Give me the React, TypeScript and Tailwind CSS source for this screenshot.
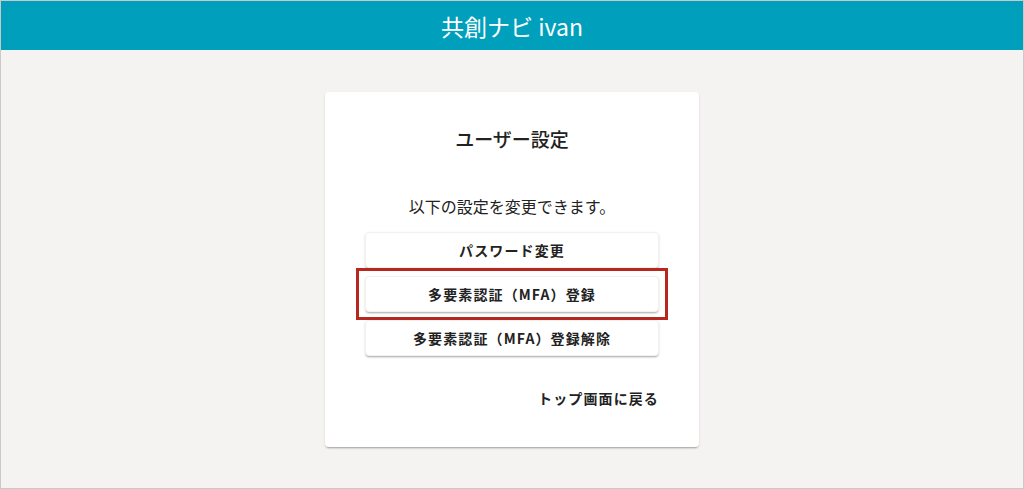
import React from 'react';

const jp = { fontFamily: '"Noto Sans CJK JP", "Noto Sans", sans-serif' };

function SettingButton({ label, highlight = false }: { label: string; highlight?: boolean }) {
  return (
    <div className="relative">
      <button className="w-full h-[36px] rounded-[4px] bg-white text-[14px] font-bold tracking-[0.08em] text-[#222] shadow-[0_2px_2px_-1px_rgba(0,0,0,0.28),0_1px_3px_0_rgba(0,0,0,0.1)] border border-[#f3f1ec]">
        {label}
      </button>
      {highlight && (
        <span className="absolute -left-[9px] -right-[9px] -top-[8px] -bottom-[8px] border-[3px] border-[#b7271f] pointer-events-none" />
      )}
    </div>
  );
}

export default function App() {
  return (
    <div style={jp} className="h-[489px] w-[1024px] border border-[#c9c9c9] bg-[#f4f3f1] flex flex-col overflow-hidden">
      <header className="h-[49px] shrink-0 bg-[#00a0bc] flex items-center justify-center">
        <h1 className="text-white text-[23px] font-normal leading-none pt-[2px]">共創ナビ ivan</h1>
      </header>

      <main className="flex justify-center pt-[42px]">
        <div className="w-[374px] h-[355px] bg-white rounded-[4px] shadow-[0_2px_2px_-1px_rgba(0,0,0,0.3),0_1px_3px_rgba(0,0,0,0.08)] flex flex-col px-[40px]">
          <h2 className="text-[19px] font-medium text-[#222] text-center mt-[35px] leading-[24px]">ユーザー設定</h2>
          <p className="text-[16px] text-[#222] text-center mt-[43px] leading-[24px]">以下の設定を変更できます。</p>
          <div className="flex flex-col gap-[8px] mt-[14px]">
            <SettingButton label="パスワード変更" />
            <SettingButton label="多要素認証（MFA）登録" highlight />
            <SettingButton label="多要素認証（MFA）登録解除" />
          </div>
          <div className="flex justify-end mt-[32px]">
            <button className="text-[14px] font-bold tracking-[0.08em] text-[#222] leading-[20px]">トップ画面に戻る</button>
          </div>
        </div>
      </main>
    </div>
  );
}
